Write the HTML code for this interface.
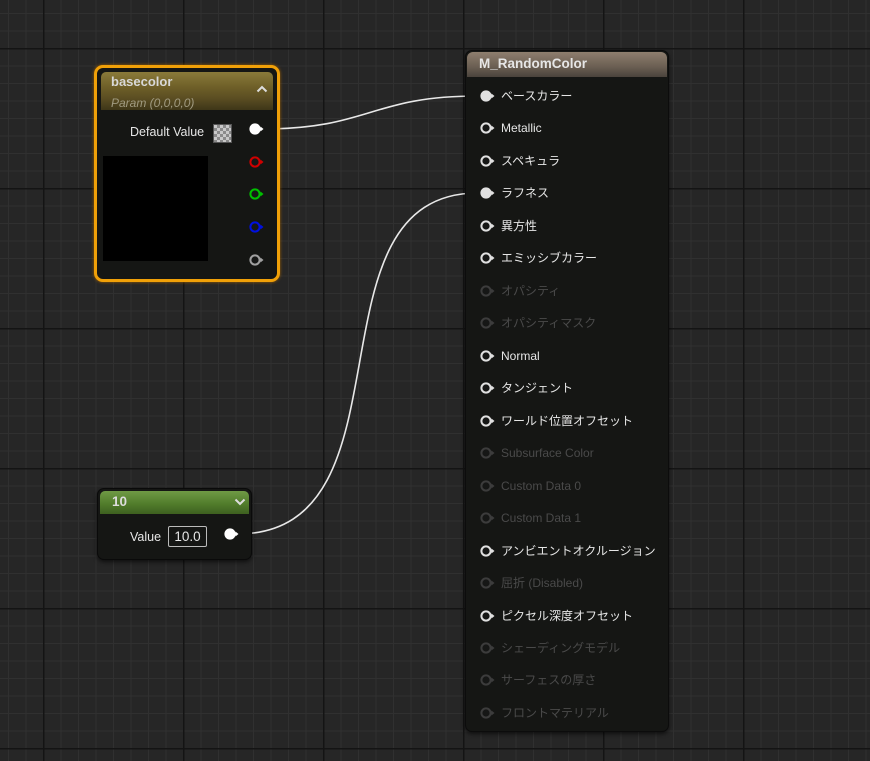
<!DOCTYPE html>
<html><head><meta charset="utf-8"><style>
*{margin:0;padding:0;box-sizing:border-box}
body{width:870px;height:761px;overflow:hidden;position:relative;background:#262626;font-family:"Liberation Sans","Noto Sans CJK JP",sans-serif;}
.grid{position:absolute;inset:0;
background-image:
linear-gradient(to right,#141414 0 1.5px,transparent 1.5px),
linear-gradient(to bottom,#141414 0 1.5px,transparent 1.5px),
linear-gradient(to right,#303030 0 1px,transparent 1px),
linear-gradient(to bottom,#303030 0 1px,transparent 1px);
background-size:140px 140px,140px 140px,17.5px 17.5px,17.5px 17.5px;
background-position:43px 0,0 48px,8px 0,0 13px;}
.node{position:absolute;background:#151614;border-radius:7px;box-shadow:0 2px 4px rgba(0,0,0,.6);}
.t{position:absolute;font-size:12.5px;line-height:18px;height:18px;color:#e6e6e6;white-space:nowrap}
.d{color:#4a4a4a}
svg.p{position:absolute}
</style></head><body>
<div class="grid"></div>

<svg style="position:absolute;left:0;top:0" width="870" height="761">
<path d="M262 129 C 370 129, 370 96, 478 96" stroke="#e8e8e8" stroke-width="1.6" fill="none"/>
<path d="M237 534 C 420 534, 300 193, 478 193" stroke="#e8e8e8" stroke-width="1.6" fill="none"/>
</svg>

<!-- basecolor node -->
<div style="position:absolute;left:94px;top:65px;width:186px;height:217px;border:3px solid #f0a008;border-radius:9px;background:#151614;box-shadow:0 0 3px #a06000">
 <div style="position:absolute;left:4px;top:4px;right:4px;height:38px;border-radius:5px 5px 0 0;background:linear-gradient(#8a7a3a,#6e5f28 40%,#5a4d22 70%,#3e3618)"></div>
 <div class="t" style="left:14px;top:5px;font-weight:bold;color:#d8d8d8;font-size:13px">basecolor</div>
 <div class="t" style="left:14px;top:26px;font-style:italic;font-size:12px;color:#a09a80">Param (0,0,0,0)</div>
 <svg style="position:absolute;left:159px;top:17px" width="12" height="8"><path d="M1.5 6.5 L6 2 L10.5 6.5" stroke="#ddd" stroke-width="2" fill="none"/></svg>
 <div class="t" style="left:33px;top:55px;font-size:12.5px">Default Value</div>
 <div style="position:absolute;left:116px;top:56px;width:19px;height:19px;background:repeating-conic-gradient(#8a8a8a 0 25%,#c8c8c8 0 50%) 0 0/6px 6px;border:1px solid #555"></div>
 <div style="position:absolute;left:6px;top:88px;width:105px;height:105px;background:#000"></div>
</div>

<!-- 10 node -->
<div class="node" style="left:97px;top:488px;width:155px;height:72px;border:1px solid #0a0a0a">
 <div style="position:absolute;left:2px;top:2px;right:2px;height:23px;border-radius:5px 5px 0 0;background:linear-gradient(#6f9a45,#4f7a2a 60%,#3e6020)"></div>
 <div class="t" style="left:14px;top:4px;font-weight:bold;color:#ddd;font-size:13.5px">10</div>
 <svg style="position:absolute;left:136px;top:9px" width="12" height="8"><path d="M1.5 1.5 L6 6 L10.5 1.5" stroke="#ddd" stroke-width="2" fill="none"/></svg>
 <div class="t" style="left:32px;top:39px;font-size:12.5px">Value</div>
 <div style="position:absolute;left:70px;top:37px;width:39px;height:21px;border:1px solid #bbb;border-radius:2px;color:#e6e6e6;font-size:13.5px;text-align:center;line-height:19px">10.0</div>
</div>

<!-- material node -->
<div class="node" style="left:465px;top:50px;width:204px;height:682px;border:1px solid #0c0c0c">
 <div style="position:absolute;left:1px;top:1px;right:1px;height:25px;border-radius:6px 6px 0 0;background:linear-gradient(#8e7e6e,#6a5e52 60%,#4a433c)"></div>
 <div class="t" style="left:13px;top:4px;font-weight:bold;color:#e6e6e6;font-size:13.5px">M_RandomColor</div>
</div>

<div id="rows"></div>
<script>
const L=[["ベースカラー",1,1],["Metallic",1,0],["スペキュラ",1,0],["ラフネス",1,1],["異方性",1,0],["エミッシブカラー",1,0],["オパシティ",0,0],["オパシティマスク",0,0],["Normal",1,0],["タンジェント",1,0],["ワールド位置オフセット",1,0],["Subsurface Color",0,0],["Custom Data 0",0,0],["Custom Data 1",0,0],["アンビエントオクルージョン",1,0],["屈折 (Disabled)",0,0],["ピクセル深度オフセット",1,0],["シェーディングモデル",0,0],["サーフェスの厚さ",0,0],["フロントマテリアル",0,0]];
function pin(x,y,col,fill){return `<svg class="p" style="left:${x-7}px;top:${y-7}px" width="18" height="14"><circle cx="7" cy="7" r="4.6" fill="${fill?col:'#161716'}" stroke="${col}" stroke-width="2"/><path d="M12.5 4.5 L15.5 7 L12.5 9.5Z" fill="${col}"/></svg>`}
let h="";
L.forEach((r,i)=>{const y=96+i*32.47;const c=r[1]?"#e0e0e0":"#3c3c3c";
h+=pin(486,y,c,r[2]);
h+=`<div class="t ${r[1]?'':'d'}" style="left:501px;top:${y-9}px;font-size:12px">${r[0]}</div>`;});
h+=pin(255,129,"#ffffff",1);
h+=pin(255,162,"#d00000",0);
h+=pin(255,194,"#00c000",0);
h+=pin(255,227,"#0010e0",0);
h+=pin(255,260,"#a0a0a0",0);
h+=pin(230,534,"#ffffff",1);
document.getElementById("rows").innerHTML=h;
</script>
</body></html>
